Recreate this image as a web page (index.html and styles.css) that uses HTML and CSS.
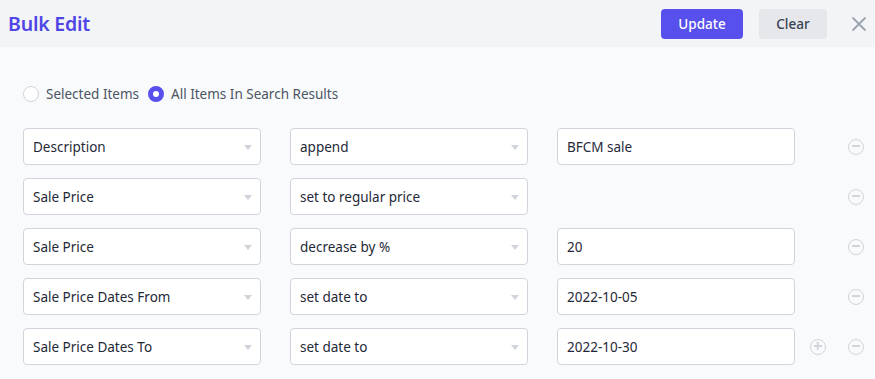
FILE: index.html
```html
<!DOCTYPE html>
<html lang="en">
<head>
  <meta charset="UTF-8">
  <title>Bulk Edit</title>
  <link rel="stylesheet" href="styles.css">
</head>
<body>
  <header class="topbar">
    <h1>Bulk Edit</h1>
    <div class="actions">
      <button class="btn btn-primary">Update</button>
      <button class="btn btn-light">Clear</button>
      <button class="close" aria-label="Close">
        <svg width="16" height="16" viewBox="0 0 16 16"><path d="M2 2L14 14M14 2L2 14" stroke="currentColor" stroke-width="1.8" stroke-linecap="round"/></svg>
      </button>
    </div>
  </header>

  <main class="content">
    <div class="scope">
      <label class="radio"><span class="dot"></span>Selected Items</label>
      <label class="radio checked"><span class="dot"></span>All Items In Search Results</label>
    </div>

    <div class="rows">
      <div class="row">
        <div class="field select">Description</div>
        <div class="field select">append</div>
        <div class="field">BFCM sale</div>
        <div class="row-actions"><span class="icon minus"></span></div>
      </div>
      <div class="row">
        <div class="field select">Sale Price</div>
        <div class="field select">set to regular price</div>
        <div class="field empty"></div>
        <div class="row-actions"><span class="icon minus"></span></div>
      </div>
      <div class="row">
        <div class="field select">Sale Price</div>
        <div class="field select">decrease by %</div>
        <div class="field">20</div>
        <div class="row-actions"><span class="icon minus"></span></div>
      </div>
      <div class="row">
        <div class="field select">Sale Price Dates From</div>
        <div class="field select">set date to</div>
        <div class="field">2022-10-05</div>
        <div class="row-actions"><span class="icon minus"></span></div>
      </div>
      <div class="row">
        <div class="field select">Sale Price Dates To</div>
        <div class="field select">set date to</div>
        <div class="field">2022-10-30</div>
        <div class="row-actions"><span class="icon plus"></span><span class="icon minus"></span></div>
      </div>
    </div>
  </main>
</body>
</html>
```

FILE: styles.css
```css
* {
  margin: 0;
  padding: 0;
  box-sizing: border-box;
  font-family: 'Noto Sans', sans-serif;
}
body {
  background-color: #f9fafb;
  color: #1f2937;
}
.topbar {
  height: 47px;
  background-color: #f3f4f6;
  display: flex;
  align-items: center;
  justify-content: space-between;
  padding: 0 8px;
}
.topbar h1 {
  font-size: 19.5px;
  font-weight: 600;
  color: #4f46e5;
  letter-spacing: -0.2px;
}
.actions {
  display: flex;
  align-items: center;
}
.btn {
  height: 30px;
  border: none;
  border-radius: 4px;
  font-size: 13.5px;
  font-weight: 500;
  padding: 0 12px;
}
.btn-primary {
  width: 82px;
  background-color: #5850ec;
  color: #fff;
}
.btn-light {
  width: 68px;
  margin-left: 16px;
  background-color: #e5e7eb;
  color: #374151;
}
.close {
  margin-left: 24px;
  background: none;
  border: none;
  color: #9ca3af;
  display: flex;
}
.content {
  padding: 38px 11px 0 23px;
}
.scope {
  display: flex;
  gap: 9px;
  height: 18px;
  align-items: center;
}
.radio {
  display: flex;
  align-items: center;
  gap: 7px;
  font-size: 13.5px;
  color: #4b5563;
}
.dot {
  width: 16px;
  height: 16px;
  border-radius: 50%;
  border: 1px solid #d1d5db;
  background-color: #fff;
}
.radio.checked .dot {
  border: 5px solid #5850ec;
}
.rows {
  margin-top: 25px;
  display: flex;
  flex-direction: column;
  gap: 13px;
}
.row {
  display: flex;
  align-items: center;
}
.field {
  flex-shrink: 0;
  width: 238px;
  height: 37px;
  border: 1px solid #d1d5db;
  border-radius: 4px;
  background-color: #fff;
  font-size: 13.5px;
  padding: 0 9px;
  display: flex;
  align-items: center;
  position: relative;
}
.field + .field {
  margin-left: 29px;
}
.field.empty {
  visibility: hidden;
}
.select::after {
  content: '';
  position: absolute;
  right: 8px;
  top: 16px;
  border-left: 4px solid transparent;
  border-right: 4px solid transparent;
  border-top: 5px solid #d1d5db;
}
.row-actions {
  flex: 1;
  display: flex;
  justify-content: flex-end;
  gap: 22px;
}
.icon {
  width: 16px;
  height: 16px;
  border: 1.5px solid #d1d5db;
  border-radius: 50%;
  position: relative;
}
.icon::before, .plus::after {
  content: '';
  position: absolute;
  left: 3px;
  right: 3px;
  top: 5.75px;
  height: 1.5px;
  background-color: #d1d5db;
}
.plus::after {
  transform: rotate(90deg);
}
```
